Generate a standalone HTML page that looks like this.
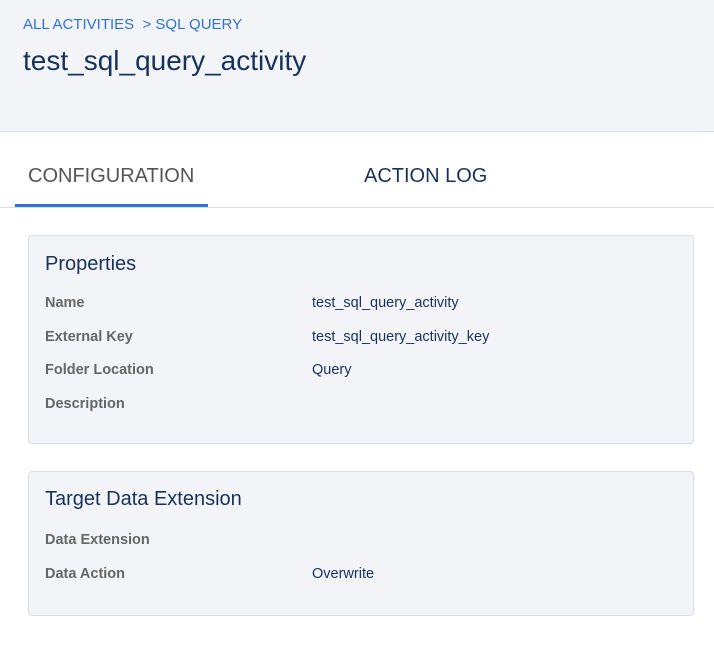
<!DOCTYPE html>
<html><head><style>
*{margin:0;padding:0;box-sizing:border-box}
body{width:714px;height:654px;background:#fff;font-family:"Liberation Sans",sans-serif;position:relative;overflow:hidden}
.hdr{position:absolute;left:0;top:0;width:714px;height:132px;background:#f3f4f8;border-bottom:1px solid #d8dde6}
.bc{position:absolute;left:23px;top:16px;font-size:15px;color:#2e72d2}
.title{position:absolute;left:23px;top:45px;font-size:28px;color:#16325c}
.tab{position:absolute;top:165px;font-size:20px}
.tabline{position:absolute;left:0;top:207px;width:714px;height:1px;background:#d8dde6}
.ul{position:absolute;left:15px;top:204px;width:193px;height:3px;background:#2e72d2}
.card{position:absolute;left:28px;width:666px;background:#f3f4f8;border:1px solid #d8dde6;border-radius:4px}
.card h2{position:absolute;left:16px;font-weight:normal;font-size:20px;color:#16325c}
.l{position:absolute;left:16px;font-size:14.5px;font-weight:bold;color:#666}
.v{position:absolute;left:283px;font-size:14.5px;color:#16325c}
</style></head><body>
<div class="hdr"><div class="bc">ALL ACTIVITIES &nbsp;&gt; SQL QUERY</div><div class="title">test_sql_query_activity</div></div>
<div class="tab" style="left:28px;color:#545454">CONFIGURATION</div>
<div class="tab" style="left:364px;color:#16325c">ACTION LOG</div>
<div class="tabline"></div><div class="ul"></div>
<div class="card" style="top:235px;height:209px">
<h2 style="top:17px">Properties</h2>
<div class="l" style="top:59px">Name</div><div class="v" style="top:59px">test_sql_query_activity</div>
<div class="l" style="top:93px">External Key</div><div class="v" style="top:93px">test_sql_query_activity_key</div>
<div class="l" style="top:126px">Folder Location</div><div class="v" style="top:126px">Query</div>
<div class="l" style="top:160px">Description</div>
</div>
<div class="card" style="top:471px;height:145px">
<h2 style="top:16px">Target Data Extension</h2>
<div class="l" style="top:60px">Data Extension</div>
<div class="l" style="top:94px">Data Action</div><div class="v" style="top:94px">Overwrite</div>
</div>
</body></html>
